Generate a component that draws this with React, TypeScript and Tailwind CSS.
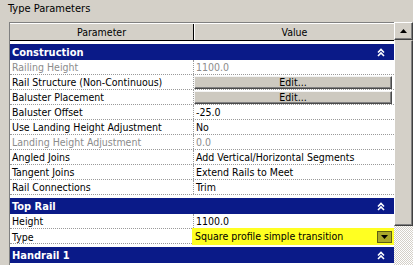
import { ReactNode } from "react";

type Row = {
  name: string;
  value?: string;
  muted?: boolean;
  kind?: "text" | "button" | "combo";
};

const construction: Row[] = [
  { name: "Railing Height", value: "1100.0", muted: true },
  { name: "Rail Structure (Non-Continuous)", value: "Edit...", kind: "button" },
  { name: "Baluster Placement", value: "Edit...", kind: "button" },
  { name: "Baluster Offset", value: "-25.0" },
  { name: "Use Landing Height Adjustment", value: "No" },
  { name: "Landing Height Adjustment", value: "0.0", muted: true },
  { name: "Angled Joins", value: "Add Vertical/Horizontal Segments" },
  { name: "Tangent Joins", value: "Extend Rails to Meet" },
  { name: "Rail Connections", value: "Trim" },
];

const topRail: Row[] = [
  { name: "Height", value: "1100.0" },
  { name: "Type", value: "Square profile simple transition", kind: "combo" },
];

function Chevrons() {
  return (
    <svg width="8" height="9" viewBox="0 0 8 9" className="mr-[9px]">
      <path d="M1 4.5 L4 1.5 L7 4.5" stroke="white" strokeWidth="1.6" fill="none" />
      <path d="M1 8 L4 5 L7 8" stroke="white" strokeWidth="1.6" fill="none" />
    </svg>
  );
}

function Band({ title }: { title: string }) {
  return (
    <div className="mt-[3px] h-[16px] bg-[#0a1a88] flex items-center justify-between">
      <span className="pl-[2px] text-white font-bold text-[11px] leading-none">{title}</span>
      <Chevrons />
    </div>
  );
}

function ValueCell({ row }: { row: Row }) {
  if (row.kind === "button") {
    return (
      <div className="h-full pr-[2px] py-[1px]">
        <div className="h-full bg-[#cdc9c0] border border-[#4a4a4a] border-t-[#f4f4f4] border-l-[#f4f4f4] shadow-[inset_-1px_-1px_0_#808080] flex items-center justify-center text-[10.5px] leading-none">
          {row.value}
        </div>
      </div>
    );
  }
  if (row.kind === "combo") {
    return (
      <div className="h-[17px] -mt-[1px] bg-[#ffff22] flex items-center justify-between pr-[1px] -ml-[2px] pl-[3px]">
        <span className="text-[10.5px] leading-none">{row.value}</span>
        <div className="w-[15px] h-[12px] bg-[#a9a82a] border border-[#5e5e14] flex items-center justify-center mr-[1px]">
          <svg width="7" height="4" viewBox="0 0 7 4">
            <path d="M0 0 H7 L3.5 4 Z" fill="black" />
          </svg>
        </div>
      </div>
    );
  }
  return (
    <div className={`h-full flex items-center pl-[2px] text-[10.5px] leading-none ${row.muted ? "text-[#8c8c8c]" : "text-black"}`}>
      {row.value}
    </div>
  );
}

function PropRow({ row }: { row: Row }) {
  return (
    <div className="grid grid-cols-[184px_1fr] h-[15px] border-b border-dotted border-[#9a9a9a]">
      <div className={`flex items-center pl-[2px] border-r border-dotted border-[#9a9a9a] text-[10.5px] leading-none ${row.muted ? "text-[#8c8c8c]" : "text-black"}`}>
        {row.name}
      </div>
      <ValueCell row={row} />
    </div>
  );
}

function Section({ title, rows }: { title: string; rows: Row[] }): ReactNode {
  return (
    <>
      <Band title={title} />
      {rows.map((r) => (
        <PropRow key={r.name} row={r} />
      ))}
    </>
  );
}

export default function App() {
  return (
    <div
      className="w-[413px] h-[265px] overflow-hidden bg-[#d4d0c8] text-black"
      style={{ fontFamily: '"DejaVu Sans Condensed", "Liberation Sans", Arial, sans-serif' }}
    >
      <div className="h-[22px] pl-[8px] pt-[1px] text-[11px] leading-[16px]">Type Parameters</div>
      <div className="flex h-[243px]">
        <div className="ml-[9px] w-[385px] bg-white border-l border-t border-[#808080] flex flex-col">
          <div className="grid grid-cols-[184px_1fr] h-[18px] bg-[#d4d0c8] border-b border-black border-t border-t-white">
            <div className="flex items-center justify-center border-r border-black text-[10.5px] leading-none">Parameter</div>
            <div className="flex items-center justify-center border-l border-white text-[10.5px] leading-none">Value</div>
          </div>
          <Section title="Construction" rows={construction} />
          <Section title="Top Rail" rows={topRail} />
          <Band title="Handrail 1" />
        </div>
        <div className="w-[19px] flex flex-col">
          <div className="h-[18px] bg-[#d4d0c8] border border-[#404040] border-t-white border-l-white shadow-[inset_-1px_-1px_0_#808080] flex items-center justify-center">
            <svg width="7" height="4" viewBox="0 0 7 4">
              <path d="M0 4 H7 L3.5 0 Z" fill="black" />
            </svg>
          </div>
          <div className="h-[186px] bg-[#d4d0c8] border border-[#404040] border-t-[#d4d0c8] border-l-white shadow-[inset_-1px_-1px_0_#808080]" />
          <div className="flex-1 bg-[repeating-conic-gradient(#ffffff_0_25%,#d4d0c8_0_50%)] bg-[length:2px_2px]" />
        </div>
      </div>
    </div>
  );
}
